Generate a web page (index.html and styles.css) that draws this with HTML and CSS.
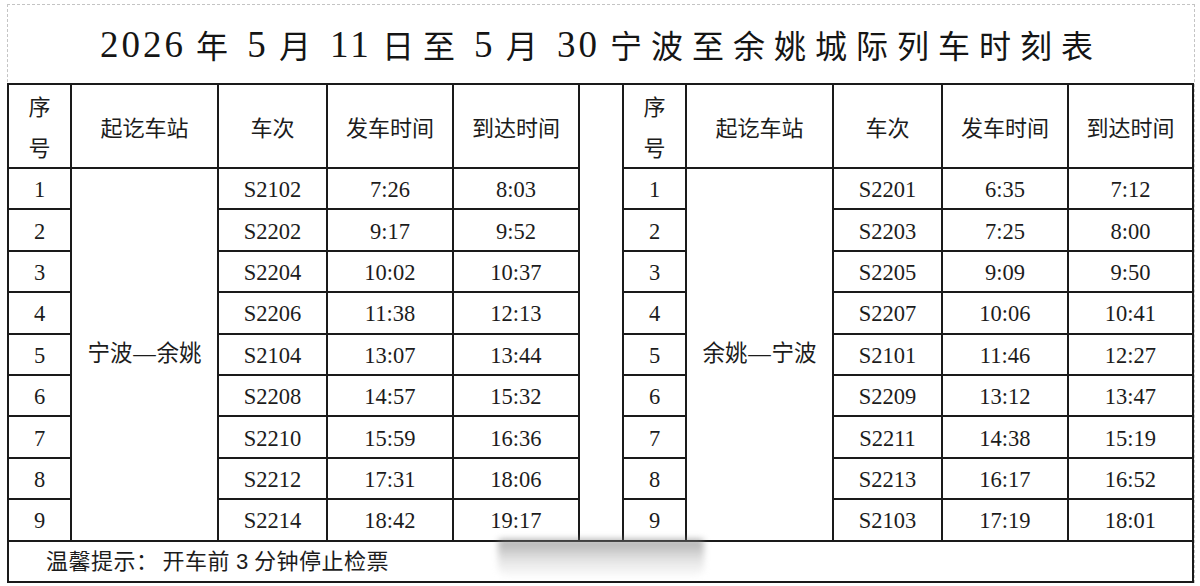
FILE: index.html
```html
<!DOCTYPE html>
<html lang="zh-CN">
<head>
<meta charset="utf-8">
<title>宁波至余姚城际列车时刻表</title>
<link rel="stylesheet" href="styles.css">
</head>
<body>
<div class="sheet">
  <h1 class="title"><span class="tn">2026</span> 年 <span class="tn">5</span> 月 <span class="tn">11</span> 日至 <span class="tn">5</span> 月 <span class="tn">30</span> 宁波至余姚城际列车时刻表</h1>
  <table class="tt">
    <colgroup>
      <col class="c-no"><col class="c-st"><col class="c-tr"><col class="c-tm"><col class="c-tm">
      <col class="c-gap">
      <col class="c-no"><col class="c-st"><col class="c-tr"><col class="c-tm"><col class="c-tm2">
    </colgroup>
    <tr class="head">
      <th class="two">序<br>号</th><th>起讫车站</th><th>车次</th><th>发车时间</th><th>到达时间</th>
      <td class="gap" rowspan="10"></td>
      <th class="two">序<br>号</th><th>起讫车站</th><th>车次</th><th>发车时间</th><th>到达时间</th>
    </tr>
    <tr><td>1</td><td class="st" rowspan="9">宁波<span class="dash">—</span>余姚</td><td>S2102</td><td>7:26</td><td>8:03</td>
        <td>1</td><td class="st" rowspan="9">余姚<span class="dash">—</span>宁波</td><td>S2201</td><td>6:35</td><td>7:12</td></tr>
    <tr><td>2</td><td>S2202</td><td>9:17</td><td>9:52</td>
        <td>2</td><td>S2203</td><td>7:25</td><td>8:00</td></tr>
    <tr><td>3</td><td>S2204</td><td>10:02</td><td>10:37</td>
        <td>3</td><td>S2205</td><td>9:09</td><td>9:50</td></tr>
    <tr><td>4</td><td>S2206</td><td>11:38</td><td>12:13</td>
        <td>4</td><td>S2207</td><td>10:06</td><td>10:41</td></tr>
    <tr><td>5</td><td>S2104</td><td>13:07</td><td>13:44</td>
        <td>5</td><td>S2101</td><td>11:46</td><td>12:27</td></tr>
    <tr><td>6</td><td>S2208</td><td>14:57</td><td>15:32</td>
        <td>6</td><td>S2209</td><td>13:12</td><td>13:47</td></tr>
    <tr><td>7</td><td>S2210</td><td>15:59</td><td>16:36</td>
        <td>7</td><td>S2211</td><td>14:38</td><td>15:19</td></tr>
    <tr><td>8</td><td>S2212</td><td>17:31</td><td>18:06</td>
        <td>8</td><td>S2213</td><td>16:17</td><td>16:52</td></tr>
    <tr><td>9</td><td>S2214</td><td>18:42</td><td>19:17</td>
        <td>9</td><td>S2103</td><td>17:19</td><td>18:01</td></tr>
    <tr class="foot"><td colspan="11">温馨提示：<span class="fgap"></span>开车前 <span class="fn">3</span> 分钟停止检票</td></tr>
  </table>
  <div class="mark" aria-hidden="true"></div>
</div>
</body>
</html>
```
FILE: styles.css
```css
html, body {
  margin: 0;
  padding: 0;
  background: #ffffff;
}
body {
  font-family: "Liberation Serif", "Noto Sans CJK SC", serif;
  color: #1c1c1c;
}
.sheet {
  position: relative;
  box-sizing: border-box;
  width: 1188px;
  margin: 4px 0 0 7px;
  border: 1px dashed #c4c4c4;
  border-bottom: none;
}
.title {
  margin: 0;
  height: 78px;
  display: flex;
  align-items: center;
  justify-content: center;
  font-family: "Noto Sans CJK SC", sans-serif;
  font-weight: 400;
  font-size: 32px;
  letter-spacing: 9px;
  word-spacing: -6px;
  white-space: pre;
  color: #151515;
}
.title .tn {
  font-family: "Liberation Serif", serif;
  font-size: 37px;
  letter-spacing: 3px;
  word-spacing: 0;
}
.tt {
  margin-left: -1px;
  width: 1186px;
  table-layout: fixed;
  border-collapse: collapse;
  border: 2px solid #1a1a1a;
}
.c-no { width: 63px; }
.c-st { width: 147px; }
.c-tr { width: 109px; }
.c-tm { width: 126px; }
.c-tm2 { width: 125px; }
.c-gap { width: 44px; }
.tt th, .tt td {
  border: 2px solid #1a1a1a;
  padding: 0;
  text-align: center;
  vertical-align: middle;
  font-weight: 400;
  white-space: nowrap;
}
.tt th {
  font-family: "Noto Sans CJK SC", sans-serif;
  font-size: 22px;
  line-height: 1.2;
}
.tt th.two {
  line-height: 41px;
}
.tt tr {
  height: 41.4px;
}
.tt tr.head {
  height: 82px;
}
.tt td {
  font-size: 22.5px;
  line-height: 1.2;
  padding-top: 2px;
}
.tt td.st {
  font-family: "Noto Sans CJK SC", sans-serif;
  font-size: 22.5px;
  padding: 0 0 4px 0;
}
.tt td.st .dash {
  font-family: "Liberation Serif", serif;
  display: inline-block;
  width: 24px;
  text-align: center;
}
.tt td.gap {
  padding: 0;
}
.tt tr.foot {
  height: 41px;
}
.tt tr.foot td {
  text-align: left;
  padding: 2px 0 0 37px;
  font-family: "Noto Sans CJK SC", sans-serif;
  font-size: 22px;
  letter-spacing: 0.5px;
}
.tt tr.foot .fgap {
  display: inline-block;
  width: 4px;
}
.tt tr.foot .fn {
  font-family: "Liberation Mono", monospace;
  font-size: 22px;
  letter-spacing: 0;
}
.mark {
  position: absolute;
  left: 490px;
  top: 534px;
  width: 206px;
  height: 38px;
  border-radius: 4px 4px 10px 10px;
  background: linear-gradient(to bottom, rgba(120,120,120,0.6), rgba(185,185,185,0.38) 55%, rgba(235,235,235,0.12));
  filter: blur(3px);
}
```
